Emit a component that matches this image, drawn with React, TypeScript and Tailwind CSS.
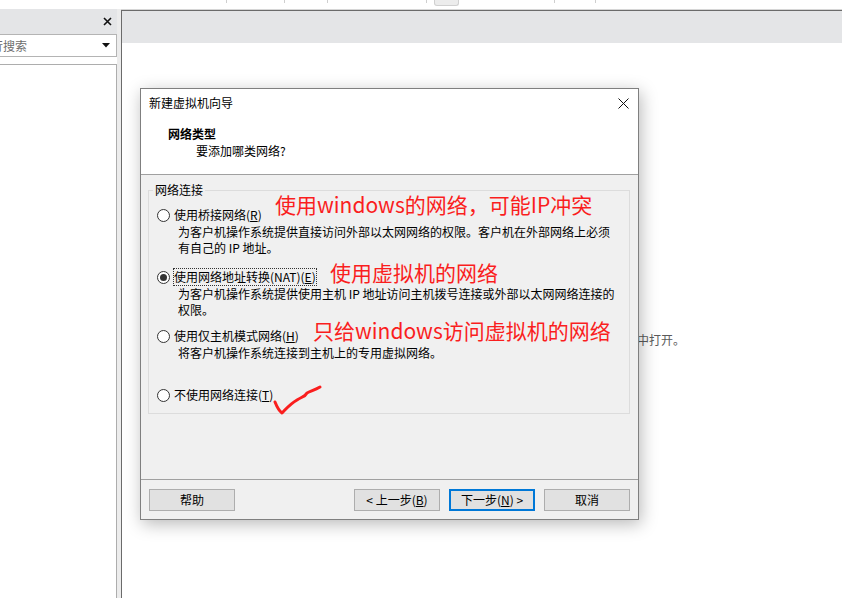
import React from "react";

function Radio({ checked }: { checked?: boolean }) {
  return (
    <span className="w-[13px] h-[13px] rounded-full border border-[#333333] bg-white flex items-center justify-center shrink-0">
      {checked && <span className="w-[7px] h-[7px] rounded-full bg-[#333333]" />}
    </span>
  );
}

function Btn({ children, primary }: { children: React.ReactNode; primary?: boolean }) {
  return (
    <div
      className={
        "w-[86px] h-[22px] flex items-center justify-center bg-[#e1e1e1] leading-[16px] " +
        (primary ? "border-2 border-[#0078d7]" : "border border-[#adadad]")
      }
    >
      {children}
    </div>
  );
}

export default function App() {
  return (
    <div className="relative w-[842px] h-[598px] overflow-hidden bg-white text-[12px] text-black font-['Noto_Sans_CJK_SC',sans-serif]">
      {/* top strip */}
      <div className="h-[9px] flex items-start">
        <div className="ml-[226px] w-px h-[3px] bg-[#cfcfcf]" />
        <div className="ml-[57px] w-px h-[3px] bg-[#cfcfcf]" />
        <div className="ml-[42px] w-px h-[3px] bg-[#cfcfcf]" />
        <div className="ml-[98px] w-px h-[3px] bg-[#cfcfcf]" />
        <div className="ml-[7px] w-[25px] h-[6px] rounded-b-[3px] border border-t-0 border-[#d0d0d0] bg-[#ececec]" />
        <div className="ml-[95px] w-px h-[3px] bg-[#cfcfcf]" />
        <div className="ml-[40px] w-px h-[3px] bg-[#cfcfcf]" />
      </div>

      <div className="flex h-[589px]">
        {/* left panel */}
        <div className="w-[117px] flex flex-col bg-white">
          <div className="h-[25px] bg-[#e4e5e7] flex items-center justify-end pr-[5px]">
            <svg width="9" height="9" viewBox="0 0 9 9">
              <path d="M1 1 L8 8 M8 1 L1 8" stroke="#111" strokeWidth="1.6" />
            </svg>
          </div>
          <div className="h-[23px] border border-l-0 border-[#b4b4b4] bg-white flex items-center overflow-hidden">
            <span className="-ml-[9px] flex-1 whitespace-nowrap text-[#6d6d6d] leading-[16px]">行搜索</span>
            <svg width="8" height="5" viewBox="0 0 8 5" className="mr-[6px]">
              <path d="M0 0 L8 0 L4 4.5 Z" fill="#111" />
            </svg>
          </div>
          <div className="mt-[7px] flex-1 border-t border-r border-[#adadad]" />
        </div>
        {/* splitter */}
        <div className="w-[4px] bg-[#ececec]" />
        {/* right pane */}
        <div className="flex-1 flex flex-col">
          <div className="h-px bg-[#d6d6d6]" />
          <div className="flex-1 border-l border-t border-[#6b6b6b] flex flex-col">
            <div className="h-[32px] bg-[#e4e5e7]" />
            <div className="flex-1 bg-white pl-[479px] pt-[289px] text-[#5b5b5b] leading-[16px] whitespace-nowrap">
              选项卡中打开。
            </div>
          </div>
        </div>
      </div>

      {/* dialog */}
      <div className="absolute left-[140px] top-[88px] w-[499px] h-[432px] border border-[#7f7f7f] bg-white flex flex-col shadow-[2px_4px_16px_rgba(0,0,0,0.28)]">
        <div className="h-[28px] flex items-center justify-between pl-[8px] pr-[9px]">
          <span className="leading-[16px]">新建虚拟机向导</span>
          <svg width="11" height="11" viewBox="0 0 11 11">
            <path d="M0.5 0.5 L10.5 10.5 M10.5 0.5 L0.5 10.5" stroke="#111" strokeWidth="1" />
          </svg>
        </div>
        <div className="h-[58px] border-b border-[#a0a0a0] pl-[27px] pt-[9px]">
          <div className="font-bold leading-[16px]">网络类型</div>
          <div className="pl-[28px] leading-[16px] mt-[1px]">要添加哪类网络?</div>
        </div>
        <div className="flex-1 bg-[#f0f0f0] pl-[7px] pt-[15px]">
          <div className="relative w-[482px] h-[224px] border border-[#dcdcdc] pl-[8px] pt-[16px]">
            <span className="absolute left-[4px] -top-[9px] px-[2px] bg-[#f0f0f0] leading-[16px]">网络连接</span>

            <div className="flex items-center h-[16px]">
              <Radio />
              <span className="ml-[4px] leading-[16px]">
                使用桥接网络(<u>R</u>)
              </span>
            </div>
            <div className="ml-[21px] mt-[1px] leading-[16px] whitespace-nowrap">
              为客户机操作系统提供直接访问外部以太网网络的权限。客户机在外部网络上必须
              <br />
              有自己的 IP 地址。
            </div>

            <div className="flex items-center h-[16px] mt-[13px]">
              <Radio checked />
              <span className="ml-[4px] leading-[16px] outline-1 outline-dotted outline-[#333333]">
                使用网络地址转换(NAT)(<u>E</u>)
              </span>
            </div>
            <div className="ml-[21px] mt-[1px] leading-[16px] whitespace-nowrap">
              为客户机操作系统提供使用主机 IP 地址访问主机拨号连接或外部以太网网络连接的
              <br />
              权限。
            </div>

            <div className="flex items-center h-[16px] mt-[10px]">
              <Radio />
              <span className="ml-[4px] leading-[16px]">
                使用仅主机模式网络(<u>H</u>)
              </span>
            </div>
            <div className="ml-[21px] mt-[1px] leading-[16px] whitespace-nowrap">
              将客户机操作系统连接到主机上的专用虚拟网络。
            </div>

            <div className="flex items-center h-[16px] mt-[26px]">
              <Radio />
              <span className="ml-[4px] leading-[16px]">
                不使用网络连接(<u>T</u>)
              </span>
            </div>
          </div>
        </div>
        <div className="h-[40px] border-t border-[#a0a0a0] bg-[#f0f0f0] flex items-center pl-[8px] pr-[8px]">
          <Btn>帮助</Btn>
          <div className="flex-1" />
          <Btn>
            &lt; 上一步(<u>B</u>)
          </Btn>
          <div className="w-[9px]" />
          <Btn primary>
            下一步(<u>N</u>) &gt;
          </Btn>
          <div className="w-[9px]" />
          <Btn>取消</Btn>
        </div>
      </div>

      {/* red annotations */}
      <div className="absolute left-[275px] top-[194px] text-[21px] leading-[21px] text-[#fa1e1e] whitespace-nowrap">
        使用windows的网络，可能IP冲突
      </div>
      <div className="absolute left-[330px] top-[262px] text-[21px] leading-[21px] text-[#fa1e1e] whitespace-nowrap">
        使用虚拟机的网络
      </div>
      <div className="absolute left-[313px] top-[320px] text-[21px] leading-[21px] text-[#fa1e1e] whitespace-nowrap">
        只给windows访问虚拟机的网络
      </div>
      <svg className="absolute left-[270px] top-[382px]" width="56" height="36" viewBox="0 0 56 36">
        <path
          d="M5 20 C7 25 9 29 12 31 C16 27 20 22 27 18 C31 15 35 15 37 11 C41 9 45 8 50 5"
          stroke="#fa1e1e"
          strokeWidth="3"
          fill="none"
          strokeLinecap="round"
          strokeLinejoin="round"
        />
      </svg>
    </div>
  );
}
